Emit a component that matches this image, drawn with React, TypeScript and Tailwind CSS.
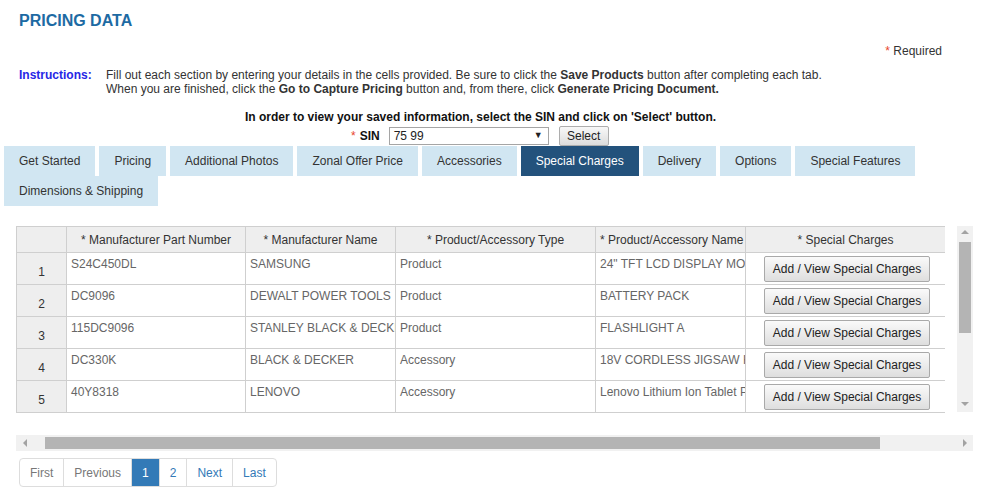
const tabs = [
  'Get Started',
  'Pricing',
  'Additional Photos',
  'Zonal Offer Price',
  'Accessories',
  'Special Charges',
  'Delivery',
  'Options',
  'Special Features',
  'Dimensions & Shipping',
];

const rows = [
  ['S24C450DL', 'SAMSUNG', 'Product', '24" TFT LCD DISPLAY MONITOR'],
  ['DC9096', 'DEWALT POWER TOOLS', 'Product', 'BATTERY PACK'],
  ['115DC9096', 'STANLEY BLACK & DECKER', 'Product', 'FLASHLIGHT A'],
  ['DC330K', 'BLACK & DECKER', 'Accessory', '18V CORDLESS JIGSAW KIT'],
  ['40Y8318', 'LENOVO', 'Accessory', 'Lenovo Lithium Ion Tablet Pen'],
];

const pages = [
  { label: 'First', tone: 'muted' },
  { label: 'Previous', tone: 'muted' },
  { label: '1', tone: 'active' },
  { label: '2', tone: 'link' },
  { label: 'Next', tone: 'link' },
  { label: 'Last', tone: 'link' },
];

function Tab({ label, active }: { label: string; active: boolean }) {
  return (
    <div
      className={
        active
          ? 'h-[30px] px-[15px] flex items-center bg-[#23527c] text-white'
          : 'h-[30px] px-[15px] flex items-center bg-[#d1e6f2] text-[#333]'
      }
    >
      {label}
    </div>
  );
}

function ChargesButton() {
  return (
    <button className="h-[26px] w-[166px] rounded-[2px] border border-[#a9a9a9] bg-gradient-to-b from-[#fafafa] to-[#dedede] text-[12px] text-[#222]">
      Add / View Special Charges
    </button>
  );
}

export default function App() {
  return (
    <div className="w-[1000px] h-[500px] bg-white overflow-hidden font-['Liberation_Sans',Arial,sans-serif] text-[12px] text-[#333]">
      <h1 className="pl-[19px] pt-[11px] text-[16px] leading-[20px] font-bold text-[#1d6aa3]">
        PRICING DATA
      </h1>

      <div className="mt-[13px] pr-[58px] text-right text-[12px] leading-[14px] text-[#333]">
        <span className="text-[#e8452c]">*</span> Required
      </div>

      <div className="mt-[10px] flex pl-[19px] leading-[14px] text-[#333]">
        <div className="w-[87px] font-bold text-[#2626e6]">Instructions:</div>
        <div>
          <div>
            Fill out each section by entering your details in the cells provided. Be sure to click the{' '}
            <b>Save Products</b> button after completing each tab.
          </div>
          <div>
            When you are finished, click the <b>Go to Capture Pricing</b> button and, from there, click{' '}
            <b>Generate Pricing Document.</b>
          </div>
        </div>
      </div>

      <div className="mt-[14px] pr-[39px] text-center font-bold leading-[14px] text-[#111]">
        In order to view your saved information, select the SIN and click on 'Select' button.
      </div>

      <div className="mt-[1px] flex items-center h-[21px] pl-[351px]">
        <span className="text-[#e8452c]">*</span>
        <span className="ml-[4px] font-bold text-[#111]">SIN</span>
        <div className="ml-[9px] h-[18px] w-[160px] border border-[#a5a5a5] bg-white flex items-center justify-between pl-[4px] pr-[5px] text-[#222]">
          <span>75 99</span>
          <span className="text-[9px]">▼</span>
        </div>
        <button className="ml-[10px] h-[20px] w-[50px] rounded-[2px] border border-[#adadad] bg-gradient-to-b from-[#f8f8f8] to-[#dcdcdc] text-[12px] text-[#222]">
          Select
        </button>
      </div>

      <div className="pl-[4px] pr-[70px] flex flex-wrap gap-x-[4px]">
        {tabs.map((t) => (
          <Tab key={t} label={t} active={t === 'Special Charges'} />
        ))}
      </div>

      <div className="mt-[20px] pl-[16px] flex">
        <div className="w-[929px] overflow-hidden">
          <table className="border-collapse table-fixed w-[929px]">
            <colgroup>
              <col className="w-[50px]" />
              <col className="w-[179px]" />
              <col className="w-[150px]" />
              <col className="w-[200px]" />
              <col className="w-[150px]" />
              <col className="w-[200px]" />
            </colgroup>
            <thead>
              <tr className="h-[26px] bg-[#eeeeee]">
                <th className="border border-[#cfcfcf] font-normal"></th>
                <th className="border border-[#cfcfcf] font-normal text-[#333]">* Manufacturer Part Number</th>
                <th className="border border-[#cfcfcf] font-normal text-[#333]">* Manufacturer Name</th>
                <th className="border border-[#cfcfcf] font-normal text-[#333]">* Product/Accessory Type</th>
                <th className="border border-[#cfcfcf] font-normal text-[#333] text-left pl-[4px] whitespace-nowrap overflow-hidden">
                  * Product/Accessory Name
                </th>
                <th className="border border-[#cfcfcf] font-normal text-[#333]">* Special Charges</th>
              </tr>
            </thead>
            <tbody>
              {rows.map((r, i) => (
                <tr key={i} className="h-[32px]">
                  <td className="border border-[#cfcfcf] bg-[#eeeeee] text-center align-top pt-[10px] text-[#333]">
                    {i + 1}
                  </td>
                  {r.map((c, j) => (
                    <td
                      key={j}
                      className="border border-[#cfcfcf] align-top pl-[4px] pt-[4px] text-[#666] whitespace-nowrap overflow-hidden leading-[14px]"
                    >
                      {c}
                    </td>
                  ))}
                  <td className="border border-[#cfcfcf] text-center align-middle p-0 pl-[3px]">
                    <ChargesButton />
                  </td>
                </tr>
              ))}
            </tbody>
          </table>
        </div>

        <div className="ml-[12px] w-[16px] h-[186px] bg-[#f1f1f1] flex flex-col items-center">
          <span className="mt-[4px] w-0 h-0 border-l-[4px] border-r-[4px] border-b-[4px] border-l-transparent border-r-transparent border-b-[#a3a3a3]"></span>
          <div className="mt-[8px] w-[12px] h-[91px] bg-[#b4b4b4]"></div>
          <div className="flex-1"></div>
          <span className="mb-[6px] w-0 h-0 border-l-[4px] border-r-[4px] border-t-[4px] border-l-transparent border-r-transparent border-t-[#a3a3a3]"></span>
        </div>
      </div>

      <div className="mt-[22px] ml-[16px] w-[957px] h-[16px] bg-[#f1f1f1] flex items-center">
        <span className="ml-[7px] w-0 h-0 border-t-[4px] border-b-[4px] border-r-[4px] border-t-transparent border-b-transparent border-r-[#a3a3a3]"></span>
        <div className="ml-[18px] w-[835px] h-[12px] bg-[#b4b4b4]"></div>
        <div className="flex-1"></div>
        <span className="mr-[6px] w-0 h-0 border-t-[4px] border-b-[4px] border-l-[4px] border-t-transparent border-b-transparent border-l-[#a3a3a3]"></span>
      </div>

      <div className="mt-[7px] ml-[19px] inline-flex rounded-[4px] border border-[#dddddd] overflow-hidden">
        {pages.map((p, i) => (
          <div
            key={p.label}
            className={
              (i > 0 ? 'border-l border-[#dddddd] ' : '') +
              'h-[27px] px-[10px] flex items-center ' +
              (p.tone === 'active'
                ? 'bg-[#337ab7] text-white border-[#337ab7]'
                : p.tone === 'muted'
                ? 'text-[#777]'
                : 'text-[#337ab7]')
            }
          >
            {p.label}
          </div>
        ))}
      </div>
    </div>
  );
}
